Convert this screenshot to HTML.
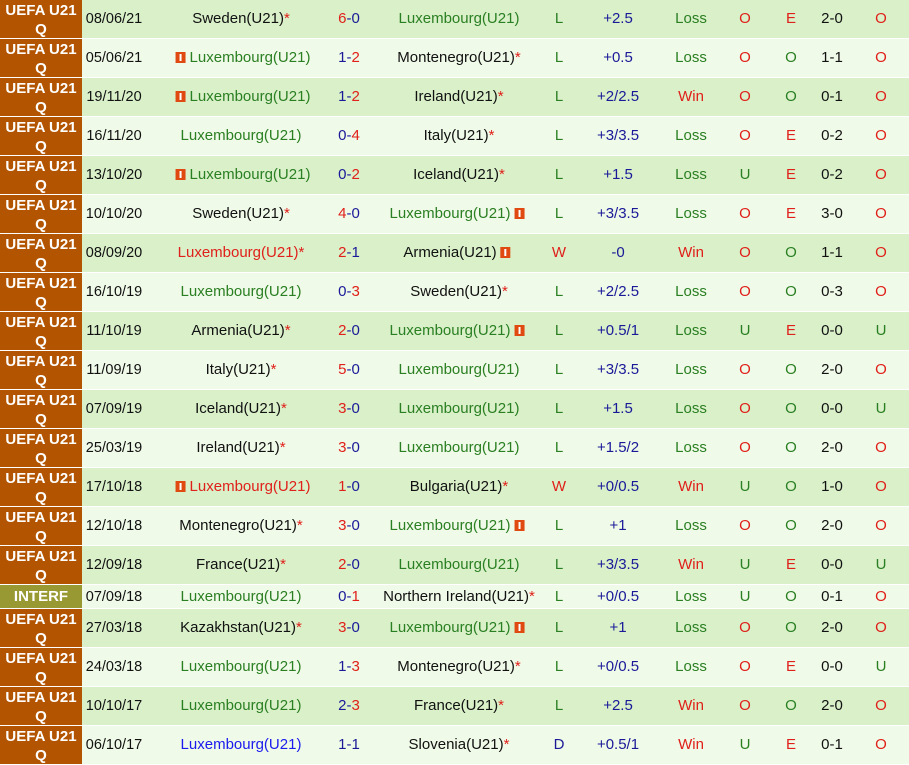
<!DOCTYPE html>
<html><head><meta charset="utf-8"><style>
*{margin:0;padding:0;box-sizing:border-box}
body{width:909px;height:765px;overflow:hidden;background:#f0fae8;font-family:"Liberation Sans",Arial,sans-serif;font-size:15px;color:#111}
.r{position:relative;height:39px;border-bottom:1px solid #fff}
.r.d{background:#d9f0c9}.r.l{background:#f0fae8}
.r.s{height:24px}
.lg{position:absolute;left:0;top:0;width:82px;height:100%;background:#b35500;color:#fff;font-weight:bold;font-size:15px;text-align:center;line-height:19px;padding-top:1px}
.r.s .lg{background:#999933;line-height:24px;padding-top:0}
.c{position:absolute;top:50%;transform:translate(-50%,-50%);white-space:nowrap;line-height:18px}
.dt{left:114px;font-size:14.5px}.h{left:241px}.sc{left:349px}.a{left:459px}.re{left:559px}.hc{left:618px;color:#1a1a99}.wl{left:691px}.ou{left:745px}.oe{left:791px}.ht{left:832px}.la{left:881px}
.g{color:#2a7f22}.rd{color:#e0201a}.b{color:#1a1a99}.bl{color:#1a1aee}
.st{color:#e0201a}
.f{display:inline-block;width:10px;height:11px;background:#e04a10;vertical-align:-1px;position:relative;margin:0 4px}
.f:after{content:"";position:absolute;left:4px;top:2px;width:2px;height:7px;background:#fff}
</style></head><body>

<div class="r d"><div class="lg">UEFA U21<br>Q</div><span class="c dt">08/06/21</span><span class="c h">Sweden(U21)<span class="st">*</span></span><span class="c sc"><span class="rd">6</span><span class="b">-0</span></span><span class="c a g">Luxembourg(U21)</span><span class="c re g">L</span><span class="c hc">+2.5</span><span class="c wl g">Loss</span><span class="c ou rd">O</span><span class="c oe rd">E</span><span class="c ht">2-0</span><span class="c la rd">O</span></div>

<div class="r l"><div class="lg">UEFA U21<br>Q</div><span class="c dt">05/06/21</span><span class="c h g"><i class="f"></i>Luxembourg(U21)</span><span class="c sc"><span class="b">1-</span><span class="rd">2</span></span><span class="c a">Montenegro(U21)<span class="st">*</span></span><span class="c re g">L</span><span class="c hc">+0.5</span><span class="c wl g">Loss</span><span class="c ou rd">O</span><span class="c oe g">O</span><span class="c ht">1-1</span><span class="c la rd">O</span></div>

<div class="r d"><div class="lg">UEFA U21<br>Q</div><span class="c dt">19/11/20</span><span class="c h g"><i class="f"></i>Luxembourg(U21)</span><span class="c sc"><span class="b">1-</span><span class="rd">2</span></span><span class="c a">Ireland(U21)<span class="st">*</span></span><span class="c re g">L</span><span class="c hc">+2/2.5</span><span class="c wl rd">Win</span><span class="c ou rd">O</span><span class="c oe g">O</span><span class="c ht">0-1</span><span class="c la rd">O</span></div>

<div class="r l"><div class="lg">UEFA U21<br>Q</div><span class="c dt">16/11/20</span><span class="c h g">Luxembourg(U21)</span><span class="c sc"><span class="b">0-</span><span class="rd">4</span></span><span class="c a">Italy(U21)<span class="st">*</span></span><span class="c re g">L</span><span class="c hc">+3/3.5</span><span class="c wl g">Loss</span><span class="c ou rd">O</span><span class="c oe rd">E</span><span class="c ht">0-2</span><span class="c la rd">O</span></div>

<div class="r d"><div class="lg">UEFA U21<br>Q</div><span class="c dt">13/10/20</span><span class="c h g"><i class="f"></i>Luxembourg(U21)</span><span class="c sc"><span class="b">0-</span><span class="rd">2</span></span><span class="c a">Iceland(U21)<span class="st">*</span></span><span class="c re g">L</span><span class="c hc">+1.5</span><span class="c wl g">Loss</span><span class="c ou g">U</span><span class="c oe rd">E</span><span class="c ht">0-2</span><span class="c la rd">O</span></div>

<div class="r l"><div class="lg">UEFA U21<br>Q</div><span class="c dt">10/10/20</span><span class="c h">Sweden(U21)<span class="st">*</span></span><span class="c sc"><span class="rd">4</span><span class="b">-0</span></span><span class="c a g">Luxembourg(U21)<i class="f"></i></span><span class="c re g">L</span><span class="c hc">+3/3.5</span><span class="c wl g">Loss</span><span class="c ou rd">O</span><span class="c oe rd">E</span><span class="c ht">3-0</span><span class="c la rd">O</span></div>

<div class="r d"><div class="lg">UEFA U21<br>Q</div><span class="c dt">08/09/20</span><span class="c h rd">Luxembourg(U21)*</span><span class="c sc"><span class="rd">2</span><span class="b">-1</span></span><span class="c a">Armenia(U21)<i class="f"></i></span><span class="c re rd">W</span><span class="c hc">-0</span><span class="c wl rd">Win</span><span class="c ou rd">O</span><span class="c oe g">O</span><span class="c ht">1-1</span><span class="c la rd">O</span></div>

<div class="r l"><div class="lg">UEFA U21<br>Q</div><span class="c dt">16/10/19</span><span class="c h g">Luxembourg(U21)</span><span class="c sc"><span class="b">0-</span><span class="rd">3</span></span><span class="c a">Sweden(U21)<span class="st">*</span></span><span class="c re g">L</span><span class="c hc">+2/2.5</span><span class="c wl g">Loss</span><span class="c ou rd">O</span><span class="c oe g">O</span><span class="c ht">0-3</span><span class="c la rd">O</span></div>

<div class="r d"><div class="lg">UEFA U21<br>Q</div><span class="c dt">11/10/19</span><span class="c h">Armenia(U21)<span class="st">*</span></span><span class="c sc"><span class="rd">2</span><span class="b">-0</span></span><span class="c a g">Luxembourg(U21)<i class="f"></i></span><span class="c re g">L</span><span class="c hc">+0.5/1</span><span class="c wl g">Loss</span><span class="c ou g">U</span><span class="c oe rd">E</span><span class="c ht">0-0</span><span class="c la g">U</span></div>

<div class="r l"><div class="lg">UEFA U21<br>Q</div><span class="c dt">11/09/19</span><span class="c h">Italy(U21)<span class="st">*</span></span><span class="c sc"><span class="rd">5</span><span class="b">-0</span></span><span class="c a g">Luxembourg(U21)</span><span class="c re g">L</span><span class="c hc">+3/3.5</span><span class="c wl g">Loss</span><span class="c ou rd">O</span><span class="c oe g">O</span><span class="c ht">2-0</span><span class="c la rd">O</span></div>

<div class="r d"><div class="lg">UEFA U21<br>Q</div><span class="c dt">07/09/19</span><span class="c h">Iceland(U21)<span class="st">*</span></span><span class="c sc"><span class="rd">3</span><span class="b">-0</span></span><span class="c a g">Luxembourg(U21)</span><span class="c re g">L</span><span class="c hc">+1.5</span><span class="c wl g">Loss</span><span class="c ou rd">O</span><span class="c oe g">O</span><span class="c ht">0-0</span><span class="c la g">U</span></div>

<div class="r l"><div class="lg">UEFA U21<br>Q</div><span class="c dt">25/03/19</span><span class="c h">Ireland(U21)<span class="st">*</span></span><span class="c sc"><span class="rd">3</span><span class="b">-0</span></span><span class="c a g">Luxembourg(U21)</span><span class="c re g">L</span><span class="c hc">+1.5/2</span><span class="c wl g">Loss</span><span class="c ou rd">O</span><span class="c oe g">O</span><span class="c ht">2-0</span><span class="c la rd">O</span></div>

<div class="r d"><div class="lg">UEFA U21<br>Q</div><span class="c dt">17/10/18</span><span class="c h rd"><i class="f"></i>Luxembourg(U21)</span><span class="c sc"><span class="rd">1</span><span class="b">-0</span></span><span class="c a">Bulgaria(U21)<span class="st">*</span></span><span class="c re rd">W</span><span class="c hc">+0/0.5</span><span class="c wl rd">Win</span><span class="c ou g">U</span><span class="c oe g">O</span><span class="c ht">1-0</span><span class="c la rd">O</span></div>

<div class="r l"><div class="lg">UEFA U21<br>Q</div><span class="c dt">12/10/18</span><span class="c h">Montenegro(U21)<span class="st">*</span></span><span class="c sc"><span class="rd">3</span><span class="b">-0</span></span><span class="c a g">Luxembourg(U21)<i class="f"></i></span><span class="c re g">L</span><span class="c hc">+1</span><span class="c wl g">Loss</span><span class="c ou rd">O</span><span class="c oe g">O</span><span class="c ht">2-0</span><span class="c la rd">O</span></div>

<div class="r d"><div class="lg">UEFA U21<br>Q</div><span class="c dt">12/09/18</span><span class="c h">France(U21)<span class="st">*</span></span><span class="c sc"><span class="rd">2</span><span class="b">-0</span></span><span class="c a g">Luxembourg(U21)</span><span class="c re g">L</span><span class="c hc">+3/3.5</span><span class="c wl rd">Win</span><span class="c ou g">U</span><span class="c oe rd">E</span><span class="c ht">0-0</span><span class="c la g">U</span></div>

<div class="r l s"><div class="lg">INTERF</div><span class="c dt">07/09/18</span><span class="c h g">Luxembourg(U21)</span><span class="c sc"><span class="b">0-</span><span class="rd">1</span></span><span class="c a">Northern Ireland(U21)<span class="st">*</span></span><span class="c re g">L</span><span class="c hc">+0/0.5</span><span class="c wl g">Loss</span><span class="c ou g">U</span><span class="c oe g">O</span><span class="c ht">0-1</span><span class="c la rd">O</span></div>

<div class="r d"><div class="lg">UEFA U21<br>Q</div><span class="c dt">27/03/18</span><span class="c h">Kazakhstan(U21)<span class="st">*</span></span><span class="c sc"><span class="rd">3</span><span class="b">-0</span></span><span class="c a g">Luxembourg(U21)<i class="f"></i></span><span class="c re g">L</span><span class="c hc">+1</span><span class="c wl g">Loss</span><span class="c ou rd">O</span><span class="c oe g">O</span><span class="c ht">2-0</span><span class="c la rd">O</span></div>

<div class="r l"><div class="lg">UEFA U21<br>Q</div><span class="c dt">24/03/18</span><span class="c h g">Luxembourg(U21)</span><span class="c sc"><span class="b">1-</span><span class="rd">3</span></span><span class="c a">Montenegro(U21)<span class="st">*</span></span><span class="c re g">L</span><span class="c hc">+0/0.5</span><span class="c wl g">Loss</span><span class="c ou rd">O</span><span class="c oe rd">E</span><span class="c ht">0-0</span><span class="c la g">U</span></div>

<div class="r d"><div class="lg">UEFA U21<br>Q</div><span class="c dt">10/10/17</span><span class="c h g">Luxembourg(U21)</span><span class="c sc"><span class="b">2-</span><span class="rd">3</span></span><span class="c a">France(U21)<span class="st">*</span></span><span class="c re g">L</span><span class="c hc">+2.5</span><span class="c wl rd">Win</span><span class="c ou rd">O</span><span class="c oe g">O</span><span class="c ht">2-0</span><span class="c la rd">O</span></div>

<div class="r l"><div class="lg">UEFA U21<br>Q</div><span class="c dt">06/10/17</span><span class="c h bl">Luxembourg(U21)</span><span class="c sc b">1-1</span><span class="c a">Slovenia(U21)<span class="st">*</span></span><span class="c re b">D</span><span class="c hc">+0.5/1</span><span class="c wl rd">Win</span><span class="c ou g">U</span><span class="c oe rd">E</span><span class="c ht">0-1</span><span class="c la rd">O</span></div>

</body></html>
